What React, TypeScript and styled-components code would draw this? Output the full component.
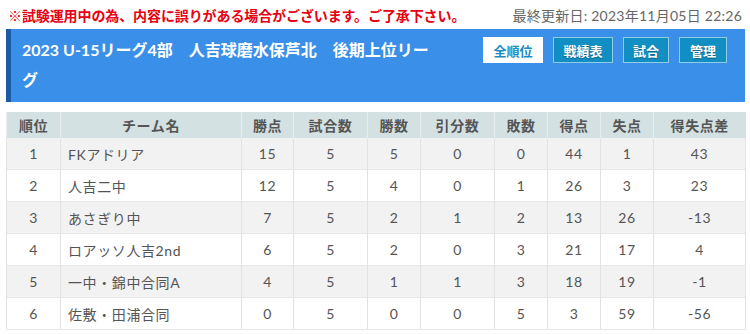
import styled, { createGlobalStyle } from 'styled-components'

const GlobalStyle = createGlobalStyle`
  body {
    margin: 0;
    background: #fff;
    font-family: Lato, "Noto Sans CJK JP", sans-serif;
    color: #555;
  }
`

const Page = styled.div`
  padding: 5px 5px 0 6px;
`

const TopLine = styled.div`
  display: flex;
  justify-content: space-between;
  align-items: center;
  height: 20px;
  padding: 0 3px 0 2px;
  margin-bottom: 4px;
`

const Notice = styled.div`
  color: #e60012;
  font-size: 14px;
  font-weight: bold;
  letter-spacing: -0.1px;
`

const Updated = styled.div`
  color: #666;
  font-size: 14px;
  letter-spacing: 0.25px;
`

const Header = styled.div`
  display: flex;
  align-items: flex-start;
  background: #3a8fe9;
  border-left: 5px solid #1c5aa6;
  padding: 8px 18px 7px 11px;
`

const Title = styled.h1`
  flex: 1;
  margin: 0;
  padding: 0 40px 0 0;
  color: #fff;
  font-size: 16px;
  font-weight: bold;
  line-height: 30px;
  margin-top: -2px;
`

const Nav = styled.div`
  display: flex;
  gap: 10px;
`

const NavButton = styled.a<{ $active?: boolean; $w: number }>`
  box-sizing: border-box;
  width: ${(p) => p.$w}px;
  height: 26px;
  display: flex;
  align-items: center;
  justify-content: center;
  font-size: 13px;
  font-weight: bold;
  border: 1px solid ${(p) => (p.$active ? '#fff' : 'rgba(190, 225, 240, 0.75)')};
  background: ${(p) => (p.$active ? '#fff' : '#128fc2')};
  color: ${(p) => (p.$active ? '#1a8cc4' : '#fff')};
  text-shadow: ${(p) => (p.$active ? 'none' : '0 1px 1px rgba(0, 0, 0, 0.35)')};
  text-decoration: none;
`

const Table = styled.table`
  margin-top: 10px;
  width: 739px;
  border-collapse: collapse;
  table-layout: fixed;
  font-size: 14px;
  letter-spacing: 0.6px;
`

const Th = styled.th`
  background: #d4e1e2;
  color: #555;
  font-weight: bold;
  height: 26px;
  padding: 0;
  border-left: 1px solid #e8eeee;
  text-align: center;
`

const Tr = styled.tr<{ $odd: boolean }>`
  background: ${(p) => (p.$odd ? '#f2f2f2' : '#fff')};
`

const Td = styled.td<{ $left?: boolean }>`
  height: 31px;
  padding: ${(p) => (p.$left ? '0 0 0 7px' : '0')};
  text-align: ${(p) => (p.$left ? 'left' : 'center')};
  border-left: 1px solid #e2e2e2;
  border-bottom: 1px solid #e6e6e6;
  color: #555;
  &:last-child {
    border-right: 1px solid #e2e2e2;
  }
`

const cols = [
  { label: '順位', w: 54 },
  { label: 'チーム名', w: 181 },
  { label: '勝点', w: 52 },
  { label: '試合数', w: 74 },
  { label: '勝数', w: 53 },
  { label: '引分数', w: 74 },
  { label: '敗数', w: 53 },
  { label: '得点', w: 53 },
  { label: '失点', w: 53 },
  { label: '得失点差', w: 92 },
]

const rows: (string | number)[][] = [
  [1, 'FKアドリア', 15, 5, 5, 0, 0, 44, 1, 43],
  [2, '人吉二中', 12, 5, 4, 0, 1, 26, 3, 23],
  [3, 'あさぎり中', 7, 5, 2, 1, 2, 13, 26, -13],
  [4, 'ロアッソ人吉2nd', 6, 5, 2, 0, 3, 21, 17, 4],
  [5, '一中・錦中合同A', 4, 5, 1, 1, 3, 18, 19, -1],
  [6, '佐敷・田浦合同', 0, 5, 0, 0, 5, 3, 59, -56],
]

const App = () => {
  return (
    <Page>
      <GlobalStyle />
      <TopLine>
        <Notice>※試験運用中の為、内容に誤りがある場合がございます。ご了承下さい。</Notice>
        <Updated>最終更新日: 2023年11月05日 22:26</Updated>
      </TopLine>
      <Header>
        <Title>2023 U-15リーグ4部　人吉球磨水保芦北　後期上位リーグ</Title>
        <Nav>
          <NavButton $active $w={60}>全順位</NavButton>
          <NavButton $w={60}>戦績表</NavButton>
          <NavButton $w={46}>試合</NavButton>
          <NavButton $w={48}>管理</NavButton>
        </Nav>
      </Header>
      <Table>
        <colgroup>
          {cols.map((c) => (
            <col key={c.label} style={{ width: c.w }} />
          ))}
        </colgroup>
        <thead>
          <tr>
            {cols.map((c) => (
              <Th key={c.label}>{c.label}</Th>
            ))}
          </tr>
        </thead>
        <tbody>
          {rows.map((r, i) => (
            <Tr key={i} $odd={i % 2 === 0}>
              {r.map((v, j) => (
                <Td key={j} $left={j === 1}>
                  {v}
                </Td>
              ))}
            </Tr>
          ))}
        </tbody>
      </Table>
    </Page>
  )
}

export default App
